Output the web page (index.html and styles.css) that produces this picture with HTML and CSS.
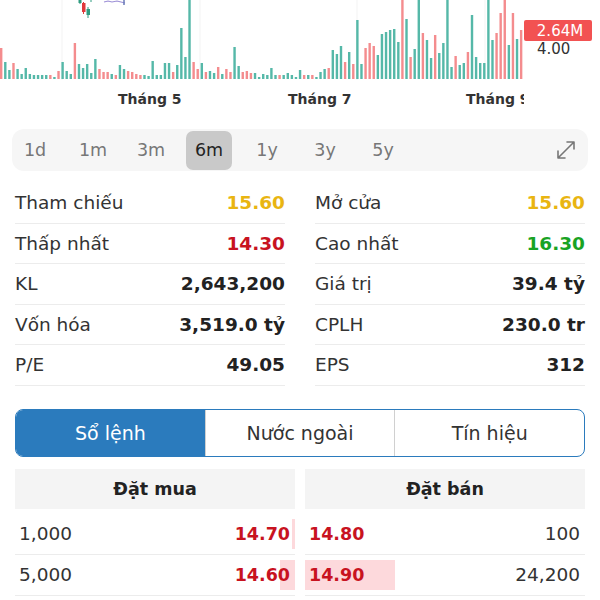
FILE: index.html
```
<!doctype html>
<html lang="vi">
<head>
	<meta charset="UTF-8">
	<title>Chi tiết cổ phiếu</title>
	<link rel="stylesheet" href="styles.css">
</head>
<body>
	<div class="chart">
		<svg width="600" height="118" viewBox="0 0 600 118">
			<defs>
				<clipPath id="clip"><rect x="0" y="0" width="524" height="118"></rect></clipPath>
			</defs>
			<g class="grid">
				<line x1="62" y1="0" x2="62" y2="80"></line>
				<line x1="200" y1="0" x2="200" y2="80"></line>
				<line x1="357" y1="0" x2="357" y2="80"></line>
				<line x1="485" y1="0" x2="485" y2="80"></line>
			</g>
			<g id="bars"></g>
			<!-- nến cuối cùng còn thấy ở mép trên -->
			<g class="candles">
				<line class="up" x1="80" y1="0" x2="80" y2="4"></line>
				<rect class="up-b" x="78.5" y="0" width="3" height="3"></rect>
				<line class="dn" x1="83.5" y1="2" x2="83.5" y2="14"></line>
				<rect class="dn-b" x="82" y="3" width="3.5" height="9"></rect>
				<line class="up" x1="88" y1="7" x2="88" y2="18"></line>
				<rect class="up-b" x="86.5" y="9" width="3.5" height="6"></rect>
				<line class="up" x1="91" y1="0" x2="91" y2="2"></line>
				<polyline class="ma" points="104,2 108,1 112,2 117,1 121,2 125,3"></polyline>
				<line class="ma2" x1="124" y1="0" x2="124" y2="5"></line>
			</g>
			<g clip-path="url(#clip)" class="months">
				<text x="118" y="104">Tháng 5</text>
				<text x="288" y="104">Tháng 7</text>
				<text x="466" y="104">Tháng 9</text>
			</g>
			<rect class="last" x="524" y="20" width="68" height="21" rx="2"></rect>
			<text class="last-v" x="560" y="36" text-anchor="middle">2.64M</text>
			<text class="last-p" x="537" y="54">4.00</text>
		</svg>
	</div>

	<div class="period">
		<div class="tab">1d</div>
		<div class="tab">1m</div>
		<div class="tab">3m</div>
		<div class="tab on">6m</div>
		<div class="tab">1y</div>
		<div class="tab">3y</div>
		<div class="tab">5y</div>
		<svg class="expand" width="22" height="22" viewBox="0 0 22 22">
			<path d="M3 19 L19 3 M12 3 H19 V10 M3 12 V19 H10"></path>
		</svg>
	</div>

	<div class="stats">
		<div class="row"><span>Tham chiếu</span><b class="ref">15.60</b></div>
		<div class="row"><span>Mở cửa</span><b class="ref">15.60</b></div>
		<div class="row"><span>Thấp nhất</span><b class="down">14.30</b></div>
		<div class="row"><span>Cao nhất</span><b class="up">16.30</b></div>
		<div class="row"><span>KL</span><b>2,643,200</b></div>
		<div class="row"><span>Giá trị</span><b>39.4 tỷ</b></div>
		<div class="row"><span>Vốn hóa</span><b>3,519.0 tỷ</b></div>
		<div class="row"><span>CPLH</span><b>230.0 tr</b></div>
		<div class="row"><span>P/E</span><b>49.05</b></div>
		<div class="row"><span>EPS</span><b>312</b></div>
	</div>

	<div class="seg">
		<div class="on">Sổ lệnh</div>
		<div>Nước ngoài</div>
		<div>Tín hiệu</div>
	</div>

	<div class="book">
		<div class="side buy">
			<div class="head">Đặt mua</div>
			<div class="orow"><i class="vol" style="width:3px"></i><span>1,000</span><b>14.70</b></div>
			<div class="orow"><i class="vol" style="width:15px"></i><span>5,000</span><b>14.60</b></div>
			<div class="orow"><i class="vol" style="width:80px"></i></div>
		</div>
		<div class="side sell">
			<div class="head">Đặt bán</div>
			<div class="orow"><i class="vol" style="width:0px"></i><b>14.80</b><span>100</span></div>
			<div class="orow"><i class="vol" style="width:90px"></i><b>14.90</b><span>24,200</span></div>
			<div class="orow"><i class="vol" style="width:140px"></i></div>
		</div>
	</div>

	<script>
		// khối lượng theo phiên: [chiều cao, tăng/giảm]
		var vols="r31 g17 g9 r16 g10 g5 g11 g5 g4 g4 g4 g4 r4 g2 r8 g17 g8 g5 r36 g15 g11 g15 g6 g20 r10 r7 r7 g5 r4 g14 g10 r8 r7 "+
			"r5 r4 g4 g3 g18 g4 g4 g16 g16 r7 g14 g51 g22 g90 r17 r10 g16 r7 g8 g6 r12 g5 r10 r7 g32 g13 r7 r8 r6 g6 g2 g5 "+
			"g4 g11 g4 r4 g4 g6 g4 g2 g9 r4 g4 r4 g2 g7 g10 r11 g29 g25 g33 r17 g27 r15 g59 g15 r31 r36 r33 g24 g45 g47 g49 "+
			"g50 g37 r90 g60 r22 g30 g90 r46 g39 g21 r44 g26 g36 g90 g12 r23 g14 g16 r27 g64 g22 g16 g16 g90 g39 r46 r66 r90 g34 r66 g40 r49";
		var list=vols.split(" ");
		var box=document.getElementById("bars");
		var str="";
		for(var i=0;i<list.length;i++){
			var c=list[i].charAt(0)=="r"?"bar-r":"bar-g";
			var h=parseInt(list[i].slice(1));
			var x=(i*4.094).toFixed(2);
			str+='<rect class="'+c+'" x="'+x+'" y="'+(79-h)+'" width="2.4" height="'+h+'"></rect>';
		}
		box.innerHTML=str;
	</script>
</body>
</html>
```

FILE: styles.css
```
body,html{
	width: 600px;
	height: 600px;
}
body{
	margin: 0;
	overflow: hidden;
	background: #fff;
	font-family: "DejaVu Sans", "Liberation Sans", sans-serif;
	color: #333;
}
b{
	font-weight: bold;
}
.chart{
	height: 118px;
}
.chart svg{
	display: block;
}
.grid line{
	stroke: #f3f3f3;
	stroke-width: 1;
}
.bar-g{
	fill: #55b8a8;
}
.bar-r{
	fill: #f48c8e;
}
.candles .up{
	stroke: #2f9c80;
	stroke-width: 1;
}
.candles .up-b{
	fill: #2f9c80;
}
.candles .dn{
	stroke: #e0393c;
	stroke-width: 1;
}
.candles .dn-b{
	fill: #e0393c;
}
.candles .ma{
	fill: none;
	stroke: #9c8fd6;
	stroke-width: 1.2;
}
.candles .ma2{
	stroke: #6a7bb8;
	stroke-width: 1.5;
}
.months text{
	font-family: "DejaVu Sans", sans-serif;
	font-weight: bold;
	font-size: 14px;
	fill: #333;
}
.last{
	fill: #f25252;
}
.last-v{
	font-size: 15px;
	fill: #fff;
}
.last-p{
	font-size: 15px;
	fill: #333;
}
.period{
	margin: 11px 12px 0;
	height: 42px;
	background: #f6f6f6;
	border-radius: 12px;
	display: flex;
	align-items: center;
	gap: 12px;
}
.tab{
	width: 46px;
	height: 39px;
	display: flex;
	align-items: center;
	justify-content: center;
	font-size: 17.5px;
	color: #777;
	border-radius: 7px;
}
.tab.on{
	background: #c9c9c9;
	color: #222;
}
.expand{
	margin-left: auto;
	margin-right: 11px;
}
.expand path{
	fill: none;
	stroke: #777;
	stroke-width: 1.6;
	stroke-linecap: round;
	stroke-linejoin: round;
}
.stats{
	display: grid;
	grid-template-columns: 1fr 1fr;
	column-gap: 30px;
	padding: 0 15px;
	margin-top: 12px;
}
.row{
	height: 40.5px;
	box-sizing: border-box;
	border-bottom: 1px solid #ececec;
	display: flex;
	align-items: center;
	justify-content: space-between;
	font-size: 18.5px;
}
.row b{
	color: #222;
}
.row .ref{
	color: #e9b512;
}
.row .down{
	color: #c8131f;
}
.row .up{
	color: #19a324;
}
.seg{
	margin: 23px 15px 0;
	height: 48px;
	box-sizing: border-box;
	border: 1.5px solid #2b7bbd;
	border-radius: 8px;
	display: flex;
	overflow: hidden;
}
.seg div{
	flex: 1;
	display: flex;
	align-items: center;
	justify-content: center;
	font-size: 19px;
	color: #333;
	border-left: 1px solid #d0d0d0;
}
.seg div.on{
	background: #2b7bbd;
	color: #fff;
	border-left: 0;
}
.book{
	display: flex;
	gap: 10px;
	padding: 0 15px;
	margin-top: 12px;
}
.side{
	flex: 1;
}
.head{
	height: 40px;
	background: #f4f4f4;
	display: flex;
	align-items: center;
	justify-content: center;
	font-weight: bold;
	font-size: 17.5px;
	color: #222;
	margin-bottom: 5px;
}
.orow{
	height: 41px;
	box-sizing: border-box;
	border-bottom: 1px solid #ececec;
	display: flex;
	align-items: center;
	justify-content: space-between;
	position: relative;
	font-size: 18.5px;
	padding: 0 5px 0 4px;
}
.orow span,.orow b{
	position: relative;
}
.orow b{
	color: #c8131f;
	font-size: 17.5px;
}
.vol{
	position: absolute;
	top: 5px;
	bottom: 5px;
	background: #fdd9dc;
}
.buy .vol{
	right: 0;
}
.sell .vol{
	left: 0;
}
```
